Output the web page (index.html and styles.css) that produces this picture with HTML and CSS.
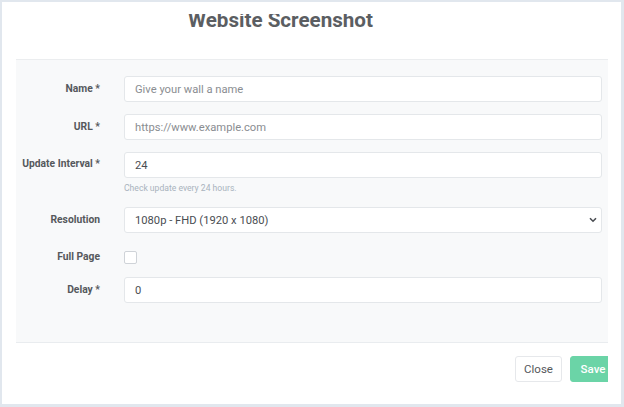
FILE: index.html
```html
<!DOCTYPE html>
<html>
<head>
<meta charset="utf-8">
<link rel="stylesheet" href="styles.css">
</head>
<body>
<div class="modal">
  <div class="header">
    <div class="header-clip">
      <h2 class="title">Website Screenshot</h2>
    </div>
  </div>
  <div class="form-body">
    <div class="row">
      <label class="label">Name *</label>
      <div class="field"><input class="input" type="text" placeholder="Give your wall a name"></div>
    </div>
    <div class="row">
      <label class="label">URL *</label>
      <div class="field"><input class="input" type="text" placeholder="https://www.example.com"></div>
    </div>
    <div class="row row-top">
      <label class="label label-top">Update Interval *</label>
      <div class="field">
        <input class="input" type="text" value="24">
        <div class="help">Check update every 24 hours.</div>
      </div>
    </div>
    <div class="row">
      <label class="label">Resolution</label>
      <div class="field select-wrap">
        <select class="input select">
          <option>1080p - FHD (1920 x 1080)</option>
        </select>
        <svg class="chevron" width="8" height="6" viewBox="0 0 8 6"><path d="M1 1.2 L4 4.2 L7 1.2" fill="none" stroke="#4a4d52" stroke-width="1.6"/></svg>
      </div>
    </div>
    <div class="row row-check">
      <label class="label">Full Page</label>
      <div class="field"><span class="checkbox"></span></div>
    </div>
    <div class="row">
      <label class="label">Delay *</label>
      <div class="field"><input class="input" type="text" value="0"></div>
    </div>
  </div>
  <div class="footer">
    <div class="footer-inner">
      <button class="btn btn-close">Close</button>
      <button class="btn btn-save">Save</button>
    </div>
  </div>
</div>
</body>
</html>
```

FILE: styles.css
```css
html, body {
  margin: 0;
  padding: 0;
}
body {
  background: #e1e7ee;
  width: 624px;
  height: 407px;
  box-sizing: border-box;
  padding: 2px 3px 3px 2px;
  font-family: Roboto, "Liberation Sans", Arial, sans-serif;
  overflow: hidden;
}
.modal {
  background: #ffffff;
  width: 619px;
  height: 402px;
  overflow: hidden;
}
.header {
  height: 57px;
  padding-top: 12px;
  box-sizing: border-box;
}
.header-clip {
  height: 16px;
  overflow: hidden;
}
.title {
  margin: -8px 0 0 186px;
  font-size: 20.6px;
  line-height: 28px;
  font-weight: 700;
  color: #5b5e62;
  letter-spacing: 0;
}
.form-body {
  margin-left: 14px;
  width: 592px;
  background: #f8f9fa;
  border-top: 1px solid #ebedef;
  border-bottom: 1px solid #e9ecef;
  padding: 16px 6px 39px 0;
  box-sizing: border-box;
  display: flex;
  flex-direction: column;
  gap: 12px;
}
.row {
  display: grid;
  grid-template-columns: 92px 1fr;
  column-gap: 16px;
  align-items: center;
}
.row-top {
  align-items: start;
}
.label {
  text-align: right;
  padding-right: 8px;
  font-size: 10.3px;
  font-weight: 700;
  color: #55585c;
  line-height: 14px;
}
.label-top {
  padding-top: 5px;
}
.field {
  display: flex;
  flex-direction: column;
}
.input {
  box-sizing: border-box;
  height: 26px;
  width: 100%;
  border: 1px solid #e4e7ea;
  border-radius: 3px;
  background: #ffffff;
  padding: 0 10px;
  font-family: Roboto, "Liberation Sans", Arial, sans-serif;
  font-size: 11.2px;
  color: #4a4d52;
  outline: none;
  margin: 0;
}
.input::placeholder {
  color: #8a8d91;
}
.help {
  margin-top: 4px;
  font-size: 8.6px;
  line-height: 13px;
  color: #a9b3bd;
}
.select-wrap {
  position: relative;
}
.select {
  -webkit-appearance: none;
  appearance: none;
}
.chevron {
  position: absolute;
  right: 5px;
  top: 10px;
}
.row-check {
  height: 20px;
}
.row-check .label {
  padding-top: 4px;
}
.checkbox {
  display: block;
  width: 13px;
  height: 13px;
  box-sizing: border-box;
  border: 1px solid #cfd3d8;
  border-radius: 2px;
  background: #ffffff;
  margin-top: 5px;
}
.footer {
  margin-left: 14px;
  width: 592px;
  overflow: hidden;
  padding-top: 13px;
}
.footer-inner {
  display: flex;
  justify-content: flex-end;
  gap: 8px;
  margin-right: -8px;
}
.btn {
  height: 26px;
  box-sizing: border-box;
  border-radius: 3px;
  font-family: Roboto, "Liberation Sans", Arial, sans-serif;
  font-size: 11.5px;
  padding: 0;
  margin: 0;
}
.btn-close {
  width: 47px;
  background: #ffffff;
  border: 1px solid #e6e8eb;
  color: #55585c;
}
.btn-save {
  width: 46px;
  background: #6bd4a7;
  border: 1px solid #6bd4a7;
  color: #ffffff;
  font-weight: 500;
}
```
